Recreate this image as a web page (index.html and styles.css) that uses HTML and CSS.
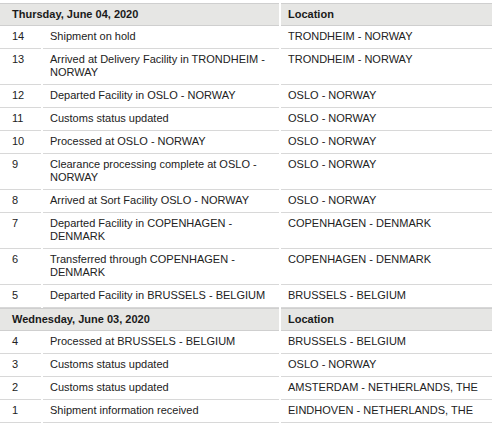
FILE: index.html
```html
<!DOCTYPE html>
<html>
<head>
<meta charset="utf-8">
<link rel="stylesheet" href="styles.css">
</head>
<body>
<div class="wrap">
<table class="events">
  <colgroup>
    <col class="c-num">
    <col class="c-desc">
    <col class="c-loc">
  </colgroup>
  <tbody>
    <tr class="day">
      <th colspan="2" class="day-title">Thursday, June 04, 2020</th>
      <th class="day-loc">Location</th>
    </tr>
    <tr><td class="num">14</td><td class="desc">Shipment on hold</td><td class="loc">TRONDHEIM - NORWAY</td></tr>
    <tr><td class="num">13</td><td class="desc">Arrived at Delivery Facility in TRONDHEIM - NORWAY</td><td class="loc">TRONDHEIM - NORWAY</td></tr>
    <tr><td class="num">12</td><td class="desc">Departed Facility in OSLO - NORWAY</td><td class="loc">OSLO - NORWAY</td></tr>
    <tr><td class="num">11</td><td class="desc">Customs status updated</td><td class="loc">OSLO - NORWAY</td></tr>
    <tr><td class="num">10</td><td class="desc">Processed at OSLO - NORWAY</td><td class="loc">OSLO - NORWAY</td></tr>
    <tr><td class="num">9</td><td class="desc">Clearance processing complete at OSLO - NORWAY</td><td class="loc">OSLO - NORWAY</td></tr>
    <tr><td class="num">8</td><td class="desc">Arrived at Sort Facility OSLO - NORWAY</td><td class="loc">OSLO - NORWAY</td></tr>
    <tr><td class="num">7</td><td class="desc">Departed Facility in COPENHAGEN - DENMARK</td><td class="loc">COPENHAGEN - DENMARK</td></tr>
    <tr><td class="num">6</td><td class="desc">Transferred through COPENHAGEN - DENMARK</td><td class="loc">COPENHAGEN - DENMARK</td></tr>
    <tr><td class="num">5</td><td class="desc">Departed Facility in BRUSSELS - BELGIUM</td><td class="loc">BRUSSELS - BELGIUM</td></tr>
    <tr class="day">
      <th colspan="2" class="day-title">Wednesday, June 03, 2020</th>
      <th class="day-loc">Location</th>
    </tr>
    <tr><td class="num">4</td><td class="desc">Processed at BRUSSELS - BELGIUM</td><td class="loc">BRUSSELS - BELGIUM</td></tr>
    <tr><td class="num">3</td><td class="desc">Customs status updated</td><td class="loc">OSLO - NORWAY</td></tr>
    <tr><td class="num">2</td><td class="desc">Customs status updated</td><td class="loc">AMSTERDAM - NETHERLANDS, THE</td></tr>
    <tr><td class="num">1</td><td class="desc">Shipment information received</td><td class="loc">EINDHOVEN - NETHERLANDS, THE</td></tr>
  </tbody>
</table>
</div>
</body>
</html>
```

FILE: styles.css
```css
html, body {
  margin: 0;
  padding: 0;
  background: #fff;
}
body {
  font-family: "Liberation Sans", Arial, Helvetica, sans-serif;
  font-size: 11px;
  line-height: 13px;
  color: #222;
  overflow: hidden;
}
.wrap {
  padding-top: 3px;
  margin-left: -2px;
  width: 496px;
}
.events {
  width: 496px;
  table-layout: fixed;
  border-collapse: separate;
  border-spacing: 2px 0;
}
.c-num { width: 41px; }
.c-desc { width: 236px; }
.c-loc { width: 211px; }

.events th,
.events td {
  box-sizing: border-box;
  text-align: left;
  vertical-align: top;
  padding: 4px 7px 5px 7px;
  border-bottom: 1px solid #d8d8d8;
}
.events th {
  background: #e6e6e4;
  font-weight: bold;
  color: #1a1a1a;
  border-top: 1px solid #cfcfcf;
  border-bottom: 1px solid #cfcfcf;
  padding: 4px 7px 4px 7px;
}
.events th.day-title {
  padding-left: 12px;
}
.events td.num {
  padding-left: 12px;
  padding-right: 2px;
}
```
